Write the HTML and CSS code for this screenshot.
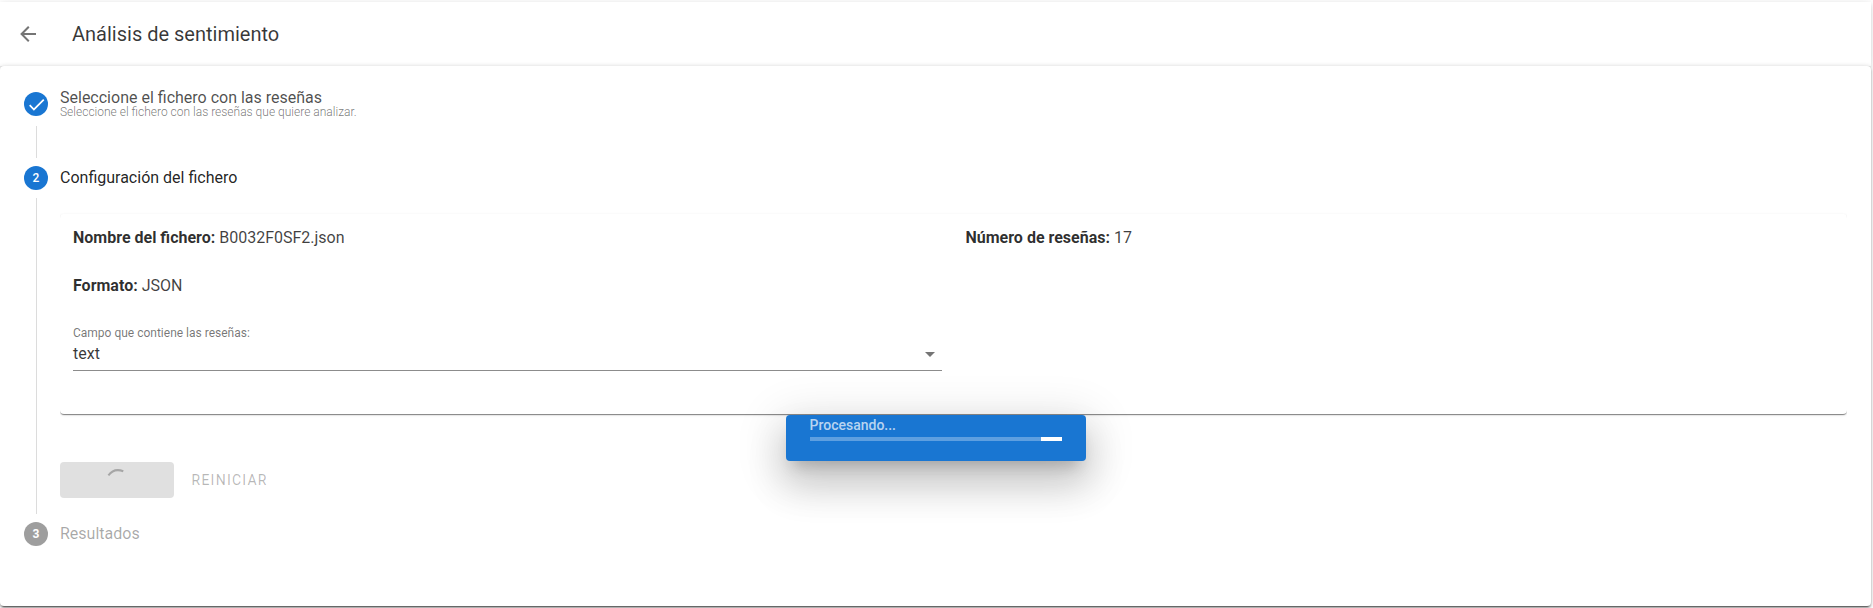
FILE: index.html
```html
<!DOCTYPE html>
<html lang="es">
<head>
<meta charset="utf-8">
<title>Análisis de sentimiento</title>
<link rel="stylesheet" href="styles.css">
</head>
<body>
<main class="page">
  <header class="toolbar">
    <svg class="back" viewBox="0 0 24 24"><path d="M20,11V13H8L13.5,18.5L12.08,19.92L4.16,12L12.08,4.08L13.5,5.5L8,11H20Z"/></svg>
    <h1 class="title">Análisis de sentimiento</h1>
  </header>
  <section class="stepper">
    <div class="step first">
      <span class="badge"><svg viewBox="0 0 24 24"><path d="M21,7L9,19L3.5,13.5L4.91,12.09L9,16.17L19.59,5.59L21,7Z"/></svg></span>
      <div class="label done">Seleccione el fichero con las reseñas<small>Seleccione el fichero con las reseñas que quiere analizar.</small></div>
    </div>
    <div class="content short"></div>
    <div class="step second">
      <span class="badge">2</span>
      <div class="label active">Configuración del fichero</div>
    </div>
    <div class="content long">
      <div class="wrapper">
        <div class="card">
          <p class="cell"><b>Nombre del fichero:</b> B0032F0SF2.json</p>
          <p class="cell"><b>Número de reseñas:</b> 17</p>
          <p class="cell wide"><b>Formato:</b> JSON</p>
          <div class="field">
            <label class="field-label">Campo que contiene las reseñas:</label>
            <div class="select"><span>text</span><svg viewBox="0 0 24 24"><path d="M7,10L12,15L17,10H7Z"/></svg></div>
          </div>
        </div>
      </div>
      <div class="actions">
        <button class="btn loading" disabled><svg viewBox="0 0 24 24"><path d="M3.400 7.300C7 2.500 12.500 1 18.300 3.300"/></svg></button>
        <button class="btn flat" disabled>Reiniciar</button>
      </div>
    </div>
    <div class="step third">
      <span class="badge off">3</span>
      <div class="label muted">Resultados</div>
    </div>
  </section>
</main>
<div class="overlay">
  <div class="dialog">
    <div class="dialog-text">Procesando...</div>
    <div class="progress"><div class="bar"></div></div>
  </div>
</div>
</body>
</html>
```
FILE: styles.css
```css
* { box-sizing: border-box; }
body { margin: 0; height: 608px; overflow: hidden; background: #fff; font-family: Roboto, sans-serif; font-size: 16px; line-height: 24px; color: rgba(0,0,0,.87); }
.page { width: 1871px; padding-top: 2px; }
.toolbar { height: 64px; display: flex; align-items: center; background: #fff; padding: 0 16px; box-shadow: 0 2px 4px -1px rgba(0,0,0,.2), 0 1px 10px rgba(0,0,0,.1); }
.back { width: 24px; height: 24px; fill: #757575; }
.title { margin: 0 0 0 32px; font-size: 20px; font-weight: 400; line-height: 30px; color: rgba(0,0,0,.78); }
.stepper { position: relative; height: 540px; background: #fff; border-radius: 4px; padding-top: 2px; box-shadow: 0 3px 1px -2px rgba(0,0,0,.4), 0 2px 2px rgba(0,0,0,.28), 0 1px 5px rgba(0,0,0,.24); }
.step { display: flex; align-items: center; padding-left: 24px; height: 72px; }
.second { height: 40px; }
.third { height: 40px; }
.badge { width: 24px; height: 24px; border-radius: 50%; background: #1976d2; color: #fff; font-size: 12px; font-weight: 500; display: flex; align-items: center; justify-content: center; margin-right: 12px; }
.badge svg { width: 21px; flex: none; fill: #fff; }
.off { background: #9e9e9e; font-weight: 700; }
.label { line-height: 16px; }
.label small { display: block; font-size: 12px; line-height: 12px; font-weight: 300; color: rgba(0,0,0,.55); }
.muted { color: rgba(0,0,0,.35); }
.done { color: rgba(0,0,0,.7); }
.content { margin-left: 36px; border-left: 1px solid #dcdcdc; }
.short { height: 32px; margin-top: -14px; margin-bottom: 0; }
.long { height: 316px; }
.wrapper { margin-left: 23px; width: 1787px; padding: 16px 0 8px; overflow: hidden; }
.card { height: 200px; border-radius: 4px; background: #fff; padding: 12px 13px; display: grid; grid-template-columns: 892.5px 1fr; grid-template-rows: 24px 24px 60px; row-gap: 24px; box-shadow: 0 2px 1px -1px rgba(0,0,0,.3), 0 1px 1px rgba(0,0,0,.2), 0 1px 3px rgba(0,0,0,.12); }
.cell { margin: 0; color: rgba(0,0,0,.75); }
.cell b { font-weight: 700; color: rgba(0,0,0,.82); }
.wide { grid-column: 1 / 3; }
.field { width: 869px; }
.field-label { display: block; font-size: 12px; line-height: 22px; color: rgba(0,0,0,.55); }
.select { display: flex; align-items: center; justify-content: space-between; height: 31px; margin-top: -4px; padding-bottom: 3px; border-bottom: 1px solid rgba(0,0,0,.45); color: rgba(0,0,0,.78); }
.select svg { width: 24px; fill: #757575; }
.actions { margin: 40px 0 0 23px; display: flex; gap: 0; }
.btn { height: 36px; border: 0; border-radius: 4px; font: 400 14px Roboto, sans-serif; letter-spacing: 1.25px; text-transform: uppercase; color: rgba(0,0,0,.28); background: none; }
.loading { width: 114px; background: #e0e0e0; display: flex; align-items: center; justify-content: center; }
.loading svg { width: 24px; fill: none; stroke: #a6a6a6; stroke-width: 2; }
.flat { padding: 0 17px 0 17.5px; }
.overlay { position: absolute; left: 786px; top: 415px; }
.dialog { width: 300px; height: 46px; border-radius: 4px; background: #1976d2; padding: 0 24px; box-shadow: 0 11px 15px -7px rgba(0,0,0,.2), 0 24px 38px 3px rgba(0,0,0,.14), 0 9px 46px 8px rgba(0,0,0,.12); }
.dialog-text { font-size: 14px; line-height: 20px; color: rgba(255,255,255,.7); font-weight: 500; height: 22px; margin-left: -.5px; }
.progress { height: 4px; background: #5e9fe0; }
.bar { height: 4px; width: 21px; margin-left: auto; background: #fff; }
```
